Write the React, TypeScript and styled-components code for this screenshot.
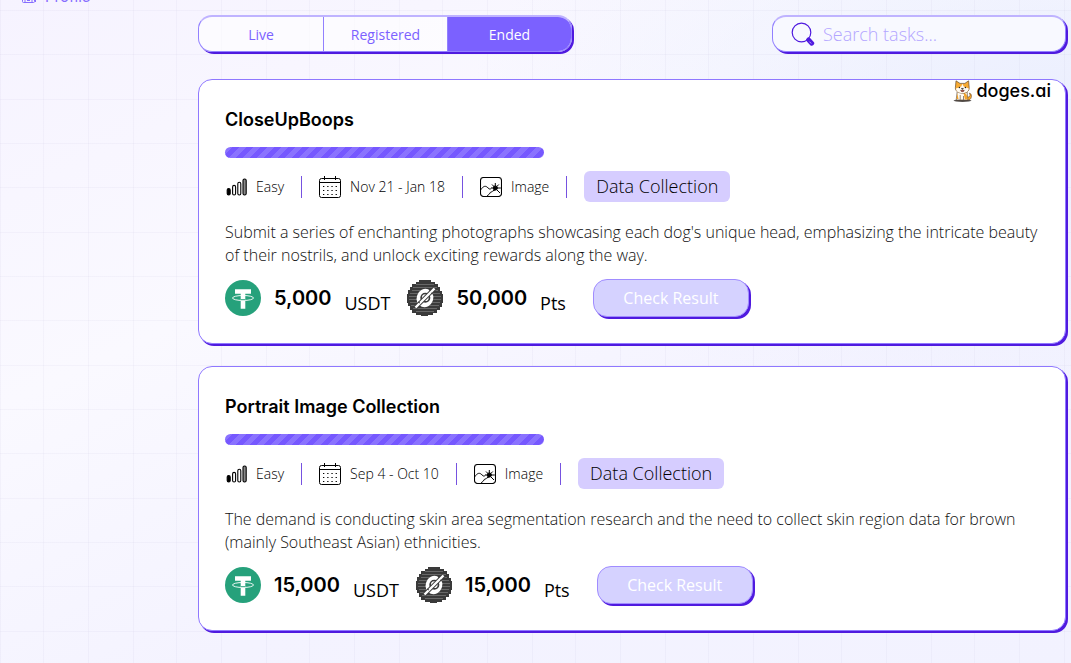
import React from 'react';
import styled, { createGlobalStyle } from 'styled-components';

const violet = '#7b61ff';
const deep = '#4f1adf';
const heading = 'Inter, "Liberation Sans", sans-serif';

const GlobalStyle = createGlobalStyle`
  *, *::before, *::after { box-sizing: border-box; }
  body {
    margin: 0;
    min-height: 100vh;
    font-family: "Open Sans", "Noto Sans", sans-serif;
    font-weight: 300;
    color: #000;
    background-color: #f8f7ff;
    background-image:
      linear-gradient(90deg, rgba(90, 80, 150, 0.04) 1px, transparent 1px, transparent 43px, rgba(90, 80, 150, 0.04) 43px, rgba(90, 80, 150, 0.04) 44px, transparent 44px, transparent 88px, rgba(90, 80, 150, 0.04) 88px, rgba(90, 80, 150, 0.04) 89px, transparent 89px),
      linear-gradient(180deg, rgba(90, 80, 150, 0.04) 1px, transparent 1px, transparent 44px, rgba(90, 80, 150, 0.04) 44px, rgba(90, 80, 150, 0.04) 45px, transparent 45px, transparent 89px, rgba(90, 80, 150, 0.04) 89px, rgba(90, 80, 150, 0.04) 90px, transparent 90px),
      radial-gradient(ellipse at 100% 18%, #ebeffe 0%, rgba(235, 239, 254, 0) 40%),
      linear-gradient(155deg, #f6f3ff 0%, #faf9ff 35%, #f4f3ff 65%, #f2f2ff 100%);
    background-size: 133px 133px, 133px 133px, auto, auto;
    background-position: 0 0, 0 10px, 0 0, 0 0;
  }
  button, input { font: inherit; }
  h2, p { margin: 0; }
`;

const Page = styled.div`
  display: grid;
  grid-template-columns: 198px minmax(0, 1fr);
  min-height: 100vh;
`;

const Sidebar = styled.nav`
  display: flex;
  align-items: flex-end;
  align-self: start;
  height: 7px;
  padding-left: 21px;
  overflow: hidden;
`;

const SideLink = styled.a`
  display: flex;
  align-items: center;
  gap: 8px;
  color: ${violet};
  font-family: ${heading};
  font-weight: 400;
  font-size: 15px;
  line-height: 20px;
  text-decoration: none;
  opacity: 0.9;
`;

const Main = styled.main`
  display: flex;
  flex-direction: column;
  gap: 22px;
  padding: 15px 5px 30px 0;
`;

const Toolbar = styled.div`
  display: flex;
  justify-content: space-between;
  margin-bottom: 5px;
`;

const Tabs = styled.div`
  display: grid;
  grid-template-columns: repeat(3, 1fr);
  width: 374px;
  height: 37px;
  overflow: hidden;
  border: 1px solid #9280ff;
  border-top: 2px solid #bfb3ff;
  border-radius: 14px;
  background: rgba(255, 255, 255, 0.6);
  box-shadow: 2px 2px 0 ${deep};
`;

const Tab = styled.button<{ $active?: boolean }>`
  padding: 0;
  border: 0;
  border-left: 1px solid #9280ff;
  color: ${p => (p.$active ? '#fff' : violet)};
  background: ${p => (p.$active ? violet : 'transparent')};
  font-weight: 400;
  font-size: 14px;
  &:first-child { border-left: 0; }
`;

const Search = styled.label`
  display: flex;
  align-items: center;
  gap: 8px;
  width: 294px;
  height: 37px;
  padding: 0 18px;
  border: 1px solid #9280ff;
  border-top: 2px solid #bfb3ff;
  border-radius: 14px;
  background: #f8f9ff;
  box-shadow: 2px 2px 0 ${deep};
`;

const SearchInput = styled.input`
  flex: 1;
  min-width: 0;
  padding: 0;
  border: 0;
  outline: 0;
  background: transparent;
  color: ${violet};
  font-size: 18px;
  &::placeholder { color: #b3a5ff; opacity: 1; }
`;

const Card = styled.article`
  position: relative;
  padding: 26px;
  border: 1px solid #8f78ff;
  border-radius: 14px;
  background: #fff;
  box-shadow: 2px 2px 0 ${deep};
`;

const Sponsor = styled.div`
  position: absolute;
  top: 0;
  right: 14px;
  display: flex;
  align-items: center;
  gap: 4px;
  height: 22px;
  font-family: ${heading};
  font-feature-settings: "cv11";
  font-weight: 500;
  font-size: 18px;
  line-height: 20px;
`;

const Title = styled.h2`
  font-family: ${heading};
  font-weight: 600;
  font-size: 18px;
  line-height: 28px;
`;

const Progress = styled.div`
  width: 319px;
  height: 11px;
  margin: 13px 0;
  border-radius: 6px;
  background: repeating-linear-gradient(135deg, #8a72ff 0 5px, #7658ff 5px 10px);
`;

const Meta = styled.div`
  display: flex;
  align-items: center;
  height: 31px;
  font-size: 14px;
`;

const MetaItem = styled.span`
  display: flex;
  align-items: center;
  gap: 9px;
  padding-right: 17px;
  margin-right: 17px;
  border-right: 1px solid #7652e0;
  line-height: 22px;
  white-space: nowrap;
`;

const Tag = styled.span`
  padding: 0 12px;
  border-radius: 6px;
  background: #d6cdff;
  font-size: 18px;
  line-height: 31px;
`;

const Description = styled.p`
  margin: 19px 0 12px;
  color: #111;
  font-size: 16px;
  line-height: 23px;
`;

const Rewards = styled.div`
  display: flex;
  align-items: center;
  height: 38px;
`;

const Reward = styled.div`
  display: flex;
  align-items: center;
  margin-right: 17px;
`;

const Amount = styled.strong`
  margin: 0 13px;
  font-family: ${heading};
  font-weight: 600;
  font-size: 20px;
`;

const Unit = styled.span`
  padding-top: 9px;
  font-weight: 400;
  font-size: 18px;
`;

const ResultButton = styled.button`
  width: 156px;
  height: 38px;
  margin-left: 10px;
  padding: 0;
  border: 1px solid #a08cff;
  border-radius: 14px;
  color: #fff;
  background: #d5d2ff;
  box-shadow: 2px 2px 0 ${deep};
  font-size: 16px;
  font-weight: 400;
`;

const ProfileIcon = () => (
  <svg width="16" height="16" viewBox="0 0 16 16" fill="none" stroke={violet} aria-hidden="true">
    <rect x="1.5" y="1.5" width="12" height="12" rx="1" />
    <path d="M4 13.5v-4h7v4M14.5 4v9M6 11.5h3" />
  </svg>
);

const SearchIcon = () => (
  <svg width="24" height="24" viewBox="0 0 24 24" fill="none" aria-hidden="true">
    <circle cx="10.5" cy="10.5" r="9.3" stroke={deep} strokeWidth="1.2" />
    <path d="m16.2 16.6 1.6 1.2" stroke={deep} strokeWidth="2" />
    <path d="m17.6 17.9 3.2 3.4" stroke={deep} strokeWidth="4.8" strokeLinecap="round" />
    <path d="m18.4 19.6 1.8 1.9" stroke="#cfc4ff" strokeWidth="0.8" />
  </svg>
);

const DogeIcon = () => (
  <svg width="19" height="22" viewBox="0 0 19 22" aria-hidden="true">
    <ellipse cx="9.5" cy="20.6" rx="9" ry="1.3" fill="#55504d" />
    <path d="M14.2 17c3 .5 3.6-2.6 1.8-3.7 2.2-.5 3.3 2.6 1.8 5.2-1 1.6-3 1.8-4.2 1.3z" fill="#f5a52c" stroke="#4b3522" strokeWidth=".5" />
    <path d="M4.2 11.5 3.2 20h11.6l-.8-9z" fill="#fffaf2" stroke="#4b3522" strokeWidth=".6" />
    <path d="M10.5 13c2.8 0 4 2.6 4 6.6h-2.6zM4.3 13l-.6 6h1.8z" fill="#f5a52c" />
    <path d="M2.4 7.5 3 .8l4 2.6h4.8L15.6.8l.6 6.7c.3 3.8-3 5.7-6.7 5.7S2 11.2 2.4 7.5z" fill="#f7aa32" stroke="#4b3522" strokeWidth=".6" />
    <path d="M9.4 3.7 8.3 6.6 3 8.4c-.1 3 3 4.5 6.4 4.5s6.4-1.5 6.3-4.5l-5-1.8z" fill="#fffaf2" />
    <circle cx="6.4" cy="7.5" r=".8" fill="#222" />
    <circle cx="12.4" cy="7.5" r=".8" fill="#222" />
    <path d="M8.4 8.4h2l-1 1z" fill="#222" stroke="#222" strokeWidth=".6" />
    <path d="M7.6 10.2h3.6c-.2 2-3.2 2-3.6 0z" fill="#c63c28" stroke="#222" strokeWidth=".4" />
    <path d="M7.2 15v4.8M10.5 16v3.8" stroke="#4b3522" strokeWidth=".6" />
  </svg>
);

const LevelIcon = () => (
  <svg width="22" height="22" viewBox="0 0 22 22" fill="none" stroke="#000" strokeWidth="1.1" aria-hidden="true">
    <rect x="2.2" y="12.6" width="3" height="6.4" rx="1.5" fill="#000" />
    <rect x="7.6" y="9.4" width="3" height="9.6" rx="1.5" />
    <rect x="12.8" y="6.2" width="3" height="12.8" rx="1.5" />
    <rect x="18" y="3" width="3.2" height="16" rx="1.5" fill="#888" />
  </svg>
);

const CalendarIcon = () => (
  <svg width="22" height="22" viewBox="0 0 22 22" fill="none" stroke="#000" aria-hidden="true">
    <rect x=".5" y="2.5" width="21" height="19" rx="2" />
    <path d="M.5 6.5h21M5.5 0v4M16.5 0v4" />
    <path d="M4 10.5h15M4 14.5h15M4 18.5h15" strokeWidth="1.2" strokeDasharray="1.3 2.9" />
  </svg>
);

const ImageIcon = () => (
  <svg width="22" height="20" viewBox="0 0 22 20" fill="none" stroke="#000" aria-hidden="true">
    <rect x=".5" y=".5" width="21" height="19" rx="3" strokeWidth="1.1" />
    <path d="M.8 12.8c2.5-4 5-4.5 7.3-1.8 1.3 1.5 2.3 1.3 3.2.2M7.5 19c.2-1.8 2-1.2 2.5-3 .3-1.4 2.2-.6 2.8-2 .6-1.3 2-.4 3-1.6" />
    <circle cx="15.3" cy="11" r="2.1" fill="#000" />
    <path d="M15.3 6v3M11 11h9.8M12 7.5l2.2 2.2M18.8 7.5l-2.3 2.3M17 13l3 3M15 12.5l-2 1.5" />
  </svg>
);

const TetherIcon = () => (
  <svg width="36" height="36" viewBox="0 0 36 36" aria-hidden="true">
    <circle cx="18" cy="18" r="18" fill="#26a17b" />
    <path d="M10 9.3h16v4.4h-5.7v15.1h-4.6V13.7H10z" fill="#fff" />
    <ellipse cx="18" cy="18" rx="10.5" ry="2.5" fill="none" stroke="#fff" strokeWidth=".9" />
    <path d="M15.7 19.2h4.6v1h-4.6z" fill="#26a17b" />
  </svg>
);

const PointsIcon = () => (
  <svg width="36" height="36" viewBox="0 0 36 36" aria-hidden="true">
    <path
      d="M12 0h12v2h4v2h3v3h2v4h2v3h1v9h-1v4h-2v3h-3v3h-4v2h-5v1h-7v-1H9v-2H5v-3H3v-4H1v-3H0v-9h1v-4h2V7h2V4h4V2h3z"
      fill="#3a3a3a"
    />
    <path
      d="M9 4.5h18M6 7.5h24M5 10.5h26M3 13.5h30M2 16.5h32M2 19.5h32M3 22.5h30M4 25.5h28M6 28.5h24M9 31.5h18"
      stroke="#686868"
      strokeWidth="1"
    />
    <ellipse cx="18" cy="18" rx="8.3" ry="9.4" transform="rotate(20 18 18)" fill="#fff" />
    <circle cx="18.3" cy="17.7" r="4.2" fill="none" stroke="#3a3a3a" strokeWidth="1.7" />
    <path d="M8.5 27.5 27.5 8.5" stroke="#3a3a3a" strokeWidth="4.2" />
    <path d="M8.5 27.5 27.5 8.5" stroke="#fff" strokeWidth="2.4" />
    <path d="m24 13 2 1M11 22l2 1M22 9l1 2" stroke="#3a3a3a" strokeWidth="1" />
  </svg>
);

interface Task {
  title: string;
  dates: string;
  description: string;
  usdt: string;
  points: string;
  sponsored?: boolean;
}

const tasks: Task[] = [
  {
    title: 'CloseUpBoops',
    dates: 'Nov 21 - Jan 18',
    description:
      "Submit a series of enchanting photographs showcasing each dog's unique head, emphasizing the intricate beauty of their nostrils, and unlock exciting rewards along the way.",
    usdt: '5,000',
    points: '50,000',
    sponsored: true,
  },
  {
    title: 'Portrait Image Collection',
    dates: 'Sep 4 - Oct 10',
    description:
      'The demand is conducting skin area segmentation research and the need to collect skin region data for brown (mainly Southeast Asian) ethnicities.',
    usdt: '15,000',
    points: '15,000',
  },
];

const TaskCard = ({ task }: { task: Task }) => (
  <Card>
    {task.sponsored && (
      <Sponsor>
        <DogeIcon />
        doges.ai
      </Sponsor>
    )}
    <Title>{task.title}</Title>
    <Progress role="progressbar" aria-label={`${task.title} progress`} aria-valuenow={100} />
    <Meta>
      <MetaItem><LevelIcon />Easy</MetaItem>
      <MetaItem><CalendarIcon />{task.dates}</MetaItem>
      <MetaItem><ImageIcon />Image</MetaItem>
      <Tag>Data Collection</Tag>
    </Meta>
    <Description>{task.description}</Description>
    <Rewards>
      <Reward>
        <TetherIcon />
        <Amount>{task.usdt}</Amount>
        <Unit>USDT</Unit>
      </Reward>
      <Reward>
        <PointsIcon />
        <Amount>{task.points}</Amount>
        <Unit>Pts</Unit>
      </Reward>
      <ResultButton type="button">Check Result</ResultButton>
    </Rewards>
  </Card>
);

export default function App() {
  return (
    <>
      <GlobalStyle />
      <Page>
        <Sidebar>
          <SideLink href="#profile"><ProfileIcon />Profile</SideLink>
        </Sidebar>
        <Main>
          <Toolbar>
            <Tabs>
              <Tab type="button">Live</Tab>
              <Tab type="button">Registered</Tab>
              <Tab type="button" $active>Ended</Tab>
            </Tabs>
            <Search>
              <SearchIcon />
              <SearchInput type="search" placeholder="Search tasks..." aria-label="Search tasks" />
            </Search>
          </Toolbar>
          {tasks.map(task => <TaskCard key={task.title} task={task} />)}
        </Main>
      </Page>
    </>
  );
}
